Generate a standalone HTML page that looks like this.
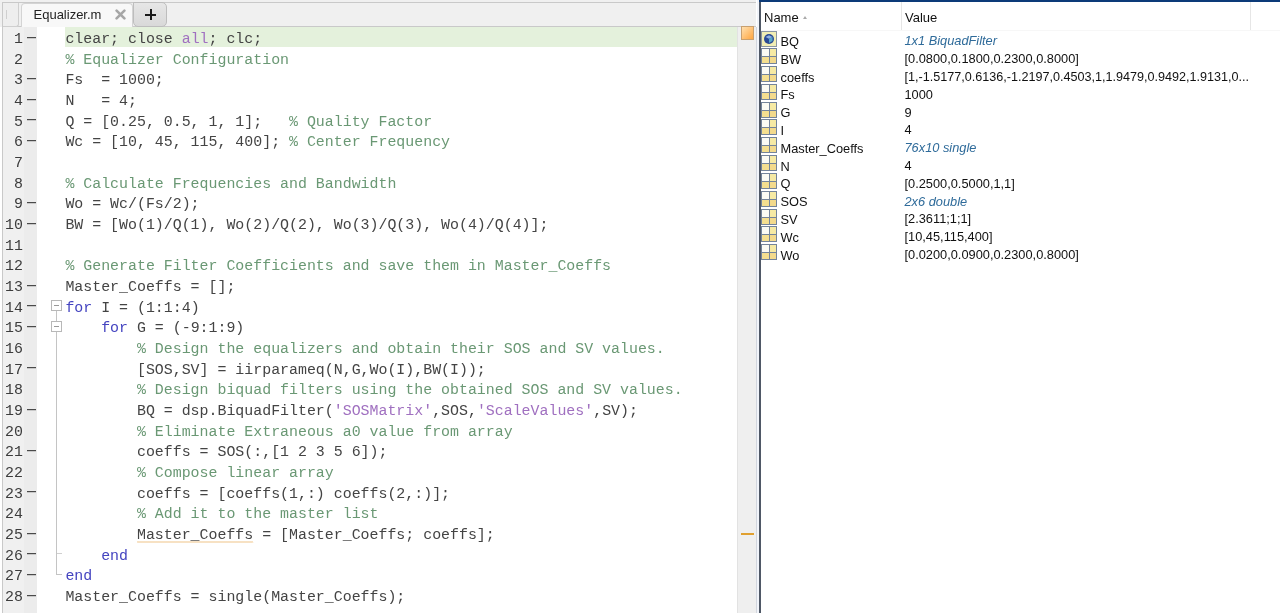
<!DOCTYPE html>
<html><head><meta charset="utf-8">
<style>
*{margin:0;padding:0;box-sizing:border-box}
html,body{width:1280px;height:613px;overflow:hidden;background:#fff;position:relative}
.abs,.code,.ui{-webkit-font-smoothing:antialiased}
.abs{position:absolute}
#tabbar{left:0;top:0;width:756px;height:27px;background:#f0f0f0}
#topline{left:2px;top:2px;width:754px;height:1px;background:#c9c9c9}
#tabline{left:2px;top:26px;width:754px;height:1px;background:#c9c9c9}
#leftline{left:2px;top:2px;width:1px;height:611px;background:#c9c9c9}
#gutter{left:3px;top:27px;width:34px;height:586px;background:#f0f0f0}
#gutter2{left:24px;top:27px;width:13px;height:586px;background:#ececec}
#mcol{left:737px;top:27px;width:19px;height:586px;background:#efefef;border-left:1px solid #e2e2e2}
#wsblue1{left:759px;top:0;width:2px;height:613px;background:#4f5866}
#sep1{left:756px;top:27px;width:1px;height:586px;background:#d2d6de}
#sep2{left:757px;top:0;width:2px;height:613px;background:#f1f4fa}
#wsblue2{left:759px;top:0;width:521px;height:2px;background:#0c3a78}
.code{font-family:"Liberation Mono",monospace;font-size:14.91px;white-space:pre;color:#444}
#lines{left:65.4px;top:29px;line-height:20.67px}
#nums{left:0;top:29px;width:23px;text-align:right;line-height:20.67px;color:#3c3c3c}
.c{color:#6a9874}
.k{color:#4444c0}
.s{color:#a070c0}
.it{color:#2f6b9a;font-style:italic}
.dash{left:27px;width:9px;height:1px;background:#4a4a4a;box-shadow:0 1px 0 #c8c8c8}
.fbox{left:51px;width:11px;height:11px;border:1px solid #b8b8b8;background:#fff}
.fbox::after{content:"";position:absolute;left:2px;top:4px;width:5px;height:1px;background:#999}
.row{font-size:12.8px;line-height:17.8px;color:#111;white-space:pre}
.ui{font-family:"Liberation Sans",sans-serif}
</style></head><body><div id="wrap" style="position:absolute;left:0;top:0;width:1280px;height:613px;will-change:transform">
<div id="tabbar" class="abs"></div>
<div id="topline" class="abs"></div>
<div id="tabline" class="abs"></div>
<div id="leftline" class="abs"></div>
<div id="gutter" class="abs"></div>
<div id="gutter2" class="abs"></div>
<div id="mcol" class="abs"></div>
<div class="abs" style="left:65px;top:27px;width:672px;height:20px;background:#e4f1dc"></div>

<div class="abs dash" style="top:36.50px"></div><div class="abs dash" style="top:77.84px"></div><div class="abs dash" style="top:98.51px"></div><div class="abs dash" style="top:119.18px"></div><div class="abs dash" style="top:139.85px"></div><div class="abs dash" style="top:201.86px"></div><div class="abs dash" style="top:222.53px"></div><div class="abs dash" style="top:284.54px"></div><div class="abs dash" style="top:305.21px"></div><div class="abs dash" style="top:325.88px"></div><div class="abs dash" style="top:367.22px"></div><div class="abs dash" style="top:408.56px"></div><div class="abs dash" style="top:449.90px"></div><div class="abs dash" style="top:491.24px"></div><div class="abs dash" style="top:532.58px"></div><div class="abs dash" style="top:553.25px"></div><div class="abs dash" style="top:573.92px"></div><div class="abs dash" style="top:594.59px"></div>
<div class="abs fbox" style="top:300px"></div>
<div class="abs fbox" style="top:321px"></div>
<div class="abs" style="left:56px;top:311px;width:1px;height:10px;background:#c4c4c4"></div>
<div class="abs" style="left:56px;top:332px;width:1px;height:243px;background:#c4c4c4"></div>
<div class="abs" style="left:56px;top:574px;width:6px;height:1px;background:#c4c4c4"></div>
<div class="abs" style="left:57px;top:553px;width:5px;height:1px;background:#d0d0d0"></div>
<div class="abs" style="left:741px;top:26px;width:13px;height:14px;border:1px solid #c8a070;background:linear-gradient(135deg,#ffe0b0,#ffa640)"></div>
<div class="abs" style="left:741px;top:533px;width:13px;height:2px;background:#e0a030"></div>
<svg class="abs" style="left:137px;top:540px" width="118" height="4"><path opacity="0.6" d="M0 3 L1 1 L2 3 L3 1 L4 3 L5 1 L6 3 L7 1 L8 3 L9 1 L10 3 L11 1 L12 3 L13 1 L14 3 L15 1 L16 3 L17 1 L18 3 L19 1 L20 3 L21 1 L22 3 L23 1 L24 3 L25 1 L26 3 L27 1 L28 3 L29 1 L30 3 L31 1 L32 3 L33 1 L34 3 L35 1 L36 3 L37 1 L38 3 L39 1 L40 3 L41 1 L42 3 L43 1 L44 3 L45 1 L46 3 L47 1 L48 3 L49 1 L50 3 L51 1 L52 3 L53 1 L54 3 L55 1 L56 3 L57 1 L58 3 L59 1 L60 3 L61 1 L62 3 L63 1 L64 3 L65 1 L66 3 L67 1 L68 3 L69 1 L70 3 L71 1 L72 3 L73 1 L74 3 L75 1 L76 3 L77 1 L78 3 L79 1 L80 3 L81 1 L82 3 L83 1 L84 3 L85 1 L86 3 L87 1 L88 3 L89 1 L90 3 L91 1 L92 3 L93 1 L94 3 L95 1 L96 3 L97 1 L98 3 L99 1 L100 3 L101 1 L102 3 L103 1 L104 3 L105 1 L106 3 L107 1 L108 3 L109 1 L110 3 L111 1 L112 3 L113 1 L114 3 L115 1 L116 3" fill="none" stroke="#f0c890" stroke-width="1"/></svg>
<div id="nums" class="abs code">1
2
3
4
5
6
7
8
9
10
11
12
13
14
15
16
17
18
19
20
21
22
23
24
25
26
27
28</div>

<div id="lines" class="abs code">clear; close <span class="s">all</span>; clc;
<span class="c">% Equalizer Configuration</span>
Fs  = 1000;
N   = 4;
Q = [0.25, 0.5, 1, 1];   <span class="c">% Quality Factor</span>
Wc = [10, 45, 115, 400]; <span class="c">% Center Frequency</span>

<span class="c">% Calculate Frequencies and Bandwidth</span>
Wo = Wc/(Fs/2);
BW = [Wo(1)/Q(1), Wo(2)/Q(2), Wo(3)/Q(3), Wo(4)/Q(4)];

<span class="c">% Generate Filter Coefficients and save them in Master_Coeffs</span>
Master_Coeffs = [];
<span class="k">for</span> I = (1:1:4)
    <span class="k">for</span> G = (-9:1:9)
        <span class="c">% Design the equalizers and obtain their SOS and SV values.</span>
        [SOS,SV] = iirparameq(N,G,Wo(I),BW(I));
        <span class="c">% Design biquad filters using the obtained SOS and SV values.</span>
        BQ = dsp.BiquadFilter(<span class="s">'SOSMatrix'</span>,SOS,<span class="s">'ScaleValues'</span>,SV);
        <span class="c">% Eliminate Extraneous a0 value from array</span>
        coeffs = SOS(:,[1 2 3 5 6]);
        <span class="c">% Compose linear array</span>
        coeffs = [coeffs(1,:) coeffs(2,:)];
        <span class="c">% Add it to the master list</span>
        Master_Coeffs = [Master_Coeffs; coeffs];
    <span class="k">end</span>
<span class="k">end</span>
Master_Coeffs = single(Master_Coeffs);</div>


<!-- tab strip -->
<div class="abs" style="left:3px;top:3px;width:16px;height:24px;background:#eeeeee;border:1px solid #cfcfcf;border-top:none;border-left:none;border-bottom-right-radius:3px"></div>
<div class="abs" style="left:6px;top:10px;width:1px;height:9px;background:#cfcfcf"></div>
<div class="abs" style="left:21px;top:3px;width:112px;height:24px;background:#f8f8f8;border:1px solid #d4d4d4;border-bottom:none;border-radius:4px 4px 0 0"></div>
<div class="abs ui" style="left:33.5px;top:6px;font-size:13px;line-height:18px;color:#222">Equalizer.m</div>
<svg class="abs" style="left:115px;top:9px" width="11" height="11" viewBox="0 0 11 11"><path d="M1.6 1.6L9.4 9.4M9.4 1.6L1.6 9.4" stroke="#a6a6a6" stroke-width="2.6" stroke-linecap="round"/></svg>
<div class="abs" style="left:133px;top:2px;width:34px;height:25px;background:linear-gradient(#e6e6e6,#d9d9d9);border:1px solid #bdbdbd;border-radius:0 5px 5px 5px"></div>
<div class="abs" style="left:145px;top:14px;width:11px;height:2px;background:#1a1a1a"></div>
<div class="abs" style="left:149.5px;top:9px;width:2px;height:11px;background:#1a1a1a"></div>

<!-- workspace -->
<div class="abs" style="left:901px;top:2px;width:1px;height:28px;background:#e6e6e6"></div>
<div class="abs" style="left:1250px;top:2px;width:1px;height:28px;background:#e6e6e6"></div>
<div class="abs" style="left:761px;top:30px;width:519px;height:1px;background:#f7f7f7"></div>
<div class="abs ui" style="left:764px;top:9px;font-size:13px;line-height:17px;color:#111">Name</div>
<div class="abs" style="left:803px;top:16px;width:0;height:0;border-left:2px solid transparent;border-right:2px solid transparent;border-bottom:3px solid #aaa"></div>
<div class="abs ui" style="left:905px;top:9px;font-size:13px;line-height:17px;color:#111">Value</div>
<div class="abs ui row" style="left:780.5px;top:33.0px">BQ</div><div class="abs ui row" style="left:904.5px;top:32.4px"><i class="it">1x1 BiquadFilter</i></div>
<div class="abs ui row" style="left:780.5px;top:50.8px">BW</div><div class="abs ui row" style="left:904.5px;top:50.2px">[0.0800,0.1800,0.2300,0.8000]</div>
<div class="abs ui row" style="left:780.5px;top:68.6px">coeffs</div><div class="abs ui row" style="left:904.5px;top:68.0px"><span style="font-size:12.6px">[1,-1.5177,0.6136,-1.2197,0.4503,1,1.9479,0.9492,1.9131,0...</span></div>
<div class="abs ui row" style="left:780.5px;top:86.4px">Fs</div><div class="abs ui row" style="left:904.5px;top:85.8px">1000</div>
<div class="abs ui row" style="left:780.5px;top:104.2px">G</div><div class="abs ui row" style="left:904.5px;top:103.6px">9</div>
<div class="abs ui row" style="left:780.5px;top:122.0px">I</div><div class="abs ui row" style="left:904.5px;top:121.4px">4</div>
<div class="abs ui row" style="left:780.5px;top:139.8px">Master_Coeffs</div><div class="abs ui row" style="left:904.5px;top:139.2px"><i class="it">76x10 single</i></div>
<div class="abs ui row" style="left:780.5px;top:157.6px">N</div><div class="abs ui row" style="left:904.5px;top:157.0px">4</div>
<div class="abs ui row" style="left:780.5px;top:175.4px">Q</div><div class="abs ui row" style="left:904.5px;top:174.8px">[0.2500,0.5000,1,1]</div>
<div class="abs ui row" style="left:780.5px;top:193.2px">SOS</div><div class="abs ui row" style="left:904.5px;top:192.6px"><i class="it">2x6 double</i></div>
<div class="abs ui row" style="left:780.5px;top:211.0px">SV</div><div class="abs ui row" style="left:904.5px;top:210.4px">[2.3611;1;1]</div>
<div class="abs ui row" style="left:780.5px;top:228.8px">Wc</div><div class="abs ui row" style="left:904.5px;top:228.2px">[10,45,115,400]</div>
<div class="abs ui row" style="left:780.5px;top:246.6px">Wo</div><div class="abs ui row" style="left:904.5px;top:246.0px">[0.0200,0.0900,0.2300,0.8000]</div>



<svg width="0" height="0" style="position:absolute"><defs>
<symbol id="grid" viewBox="0 0 16 16">
<rect x="0" y="0" width="16" height="16" fill="#74849a"/>
<rect x="1" y="1" width="7" height="7" fill="#fbfbf4"/>
<rect x="9" y="1" width="6" height="7" fill="#f6eaa4"/>
<rect x="1" y="9" width="7" height="6" fill="#f4df90"/>
<rect x="9" y="9" width="6" height="6" fill="#f3da8c"/>
</symbol>
<symbol id="obj" viewBox="0 0 16 16">
<rect x="0.5" y="0.5" width="15" height="15" fill="#f1eeb4" stroke="#8b96a2" stroke-width="1"/>
<circle cx="8" cy="8" r="5" fill="#2a4a94"/><path d="M4.5 6 L8 4.2 L11.5 6 L8 7.8 Z" fill="#8fb0e0"/><path d="M8 7.8 L11.5 6 L11.5 10 L8 12 Z" fill="#58a8c8"/>
</symbol>
</defs></svg>
<svg class="abs" style="left:761px;top:31px" width="17" height="235"><use href="#obj" x="0" y="0" width="16" height="16"/><use href="#grid" x="0" y="17" width="16" height="16"/><use href="#grid" x="0" y="35" width="16" height="16"/><use href="#grid" x="0" y="53" width="16" height="16"/><use href="#grid" x="0" y="71" width="16" height="16"/><use href="#grid" x="0" y="88" width="16" height="16"/><use href="#grid" x="0" y="106" width="16" height="16"/><use href="#grid" x="0" y="124" width="16" height="16"/><use href="#grid" x="0" y="142" width="16" height="16"/><use href="#grid" x="0" y="160" width="16" height="16"/><use href="#grid" x="0" y="178" width="16" height="16"/><use href="#grid" x="0" y="195" width="16" height="16"/><use href="#grid" x="0" y="213" width="16" height="16"/></svg><div id="sep1" class="abs"></div><div id="sep2" class="abs"></div><div id="wsblue1" class="abs"></div>
<div id="wsblue2" class="abs"></div>
</div></body></html>
